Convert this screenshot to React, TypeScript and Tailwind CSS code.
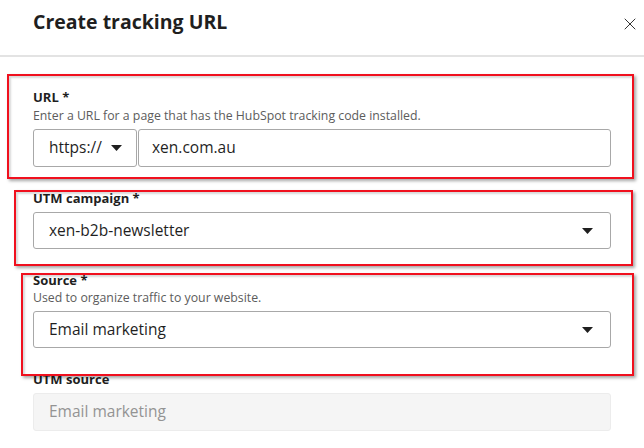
import { X } from "lucide-react";

function Caret() {
  return (
    <svg width="11" height="6" viewBox="0 0 11 6" className="shrink-0">
      <path d="M0 0h11L5.5 6z" fill="#1f1f1f" />
    </svg>
  );
}

function Label({ children, className = "" }: { children: React.ReactNode; className?: string }) {
  return (
    <div className={`h-[18px] leading-[18px] text-[13px] font-bold text-[#1f1f1f] ${className}`}>
      {children}
    </div>
  );
}

function Help({ children, className = "" }: { children: React.ReactNode; className?: string }) {
  return (
    <div className={`h-[16px] leading-[16px] text-[12.3px] font-medium text-[#5c5c5c] ${className}`}>
      {children}
    </div>
  );
}

function Select({ value }: { value: string }) {
  return (
    <div className="mt-[5px] h-[37px] flex items-center justify-between rounded-[3px] border border-[#a8a8a8] bg-white pl-[15px] pr-[17px] text-[15.5px] text-[#1f1f1f]">
      <span>{value}</span>
      <Caret />
    </div>
  );
}

export default function App() {
  return (
    <div
      className="relative w-[644px] h-[448px] overflow-hidden bg-white"
      style={{ fontFamily: '"Open Sans", "Noto Sans", sans-serif' }}
    >
      {/* Header */}
      <div className="h-[57px] flex items-center justify-between border-b-2 border-[#e3e3e3] pl-[33px] pr-[4px]">
        <h1 className="text-[19.5px] font-bold text-[#1f1f1f] -mt-[12px]">Create tracking URL</h1>
        <X size={20} strokeWidth={1.2} className="text-[#333] -mt-[8px]" />
      </div>

      {/* Form */}
      <div className="px-[33px] pt-[31px]">
        <Label>URL *</Label>
        <Help className="mt-[2px]">Enter a URL for a page that has the HubSpot tracking code installed.</Help>
        <div className="mt-[5px] flex h-[38px] gap-[1px] text-[15.5px] text-[#1f1f1f]">
          <div className="w-[104px] flex items-center gap-[9px] rounded-[3px] border border-[#a8a8a8] pl-[15px]">
            <span>https://</span>
            <Caret />
          </div>
          <div className="flex-1 flex items-center rounded-[3px] border border-[#a8a8a8] pl-[13px]">
            xen.com.au
          </div>
        </div>

        <Label className="mt-[22px]">UTM campaign *</Label>
        <Select value="xen-b2b-newsletter" />

        <Label className="mt-[22px]">Source *</Label>
        <Help className="mt-[1px]">Used to organize traffic to your website.</Help>
        <Select value="Email marketing" />

        <Label className="mt-[22px]">UTM source</Label>
        <div className="mt-[5px] h-[38px] flex items-center rounded-[3px] border border-[#ececec] bg-[#f5f5f5] pl-[15px] text-[15.5px] text-[#939393]">
          Email marketing
        </div>
      </div>

      {/* Red annotation boxes */}
      <div className="absolute left-[7px] top-[74px] w-[627px] h-[105px] border-2 border-[#f0101e] shadow-[2px_2px_3px_rgba(0,0,0,0.35),inset_2px_2px_2px_rgba(0,0,0,0.15)]" />
      <div className="absolute left-[14px] top-[190px] w-[619px] h-[76px] border-2 border-[#f0101e] shadow-[2px_2px_3px_rgba(0,0,0,0.35),inset_2px_2px_2px_rgba(0,0,0,0.15)]" />
      <div className="absolute left-[21px] top-[273px] w-[613px] h-[103px] border-2 border-[#f0101e] shadow-[2px_2px_3px_rgba(0,0,0,0.35),inset_2px_2px_2px_rgba(0,0,0,0.15)]" />
    </div>
  );
}
